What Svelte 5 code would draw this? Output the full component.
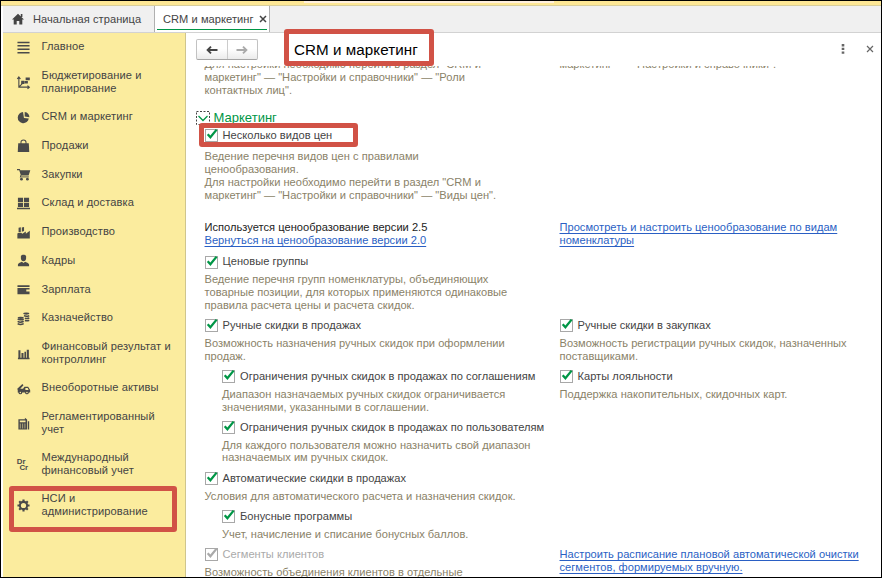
<script lang="ts">
  type Cell = {
    kind: 'option' | 'links';
    label?: string;
    lines: string[];
    nested?: boolean;
    disabled?: boolean;
  };

  const sections = [
    { icon: 'menu', lines: ['Главное'] },
    { icon: 'plan', lines: ['Бюджетирование и', 'планирование'] },
    { icon: 'pie', lines: ['CRM и маркетинг'] },
    { icon: 'bag', lines: ['Продажи'] },
    { icon: 'cart', lines: ['Закупки'] },
    { icon: 'store', lines: ['Склад и доставка'] },
    { icon: 'factory', lines: ['Производство'] },
    { icon: 'person', lines: ['Кадры'] },
    { icon: 'wallet', lines: ['Зарплата'] },
    { icon: 'coins', lines: ['Казначейство'] },
    { icon: 'chart', lines: ['Финансовый результат и', 'контроллинг'] },
    { icon: 'truck', lines: ['Внеоборотные активы'] },
    { icon: 'report', lines: ['Регламентированный', 'учет'] },
    { icon: 'drcr', lines: ['Международный', 'финансовый учет'] },
    { icon: 'gear', lines: ['НСИ и', 'администрирование'] },
  ];

  const rows: { left: Cell; right?: Cell }[] = [
    {
      left: {
        kind: 'option',
        label: 'Ценовые группы',
        lines: [
          'Ведение перечня групп номенклатуры, объединяющих',
          'товарные позиции, для которых применяются одинаковые',
          'правила расчета цены и расчета скидок.',
        ],
      },
    },
    {
      left: {
        kind: 'option',
        label: 'Ручные скидки в продажах',
        lines: ['Возможность назначения ручных скидок при оформлении', 'продаж.'],
      },
      right: {
        kind: 'option',
        label: 'Ручные скидки в закупках',
        lines: ['Возможность регистрации ручных скидок, назначенных', 'поставщиками.'],
      },
    },
    {
      left: {
        kind: 'option',
        nested: true,
        label: 'Ограничения ручных скидок в продажах по соглашениям',
        lines: ['Диапазон назначаемых ручных скидок ограничивается', 'значениями, указанными в соглашении.'],
      },
      right: {
        kind: 'option',
        label: 'Карты лояльности',
        lines: ['Поддержка накопительных, скидочных карт.'],
      },
    },
    {
      left: {
        kind: 'option',
        nested: true,
        label: 'Ограничения ручных скидок в продажах по пользователям',
        lines: ['Для каждого пользователя можно назначить свой диапазон', 'назначаемых им ручных скидок.'],
      },
    },
    {
      left: {
        kind: 'option',
        label: 'Автоматические скидки в продажах',
        lines: ['Условия для автоматического расчета и назначения скидок.'],
      },
    },
    {
      left: {
        kind: 'option',
        nested: true,
        label: 'Бонусные программы',
        lines: ['Учет, начисление и списание бонусных баллов.'],
      },
    },
    {
      left: {
        kind: 'option',
        disabled: true,
        label: 'Сегменты клиентов',
        lines: ['Возможность объединения клиентов в отдельные'],
      },
      right: {
        kind: 'links',
        lines: ['Настроить расписание плановой автоматической очистки', 'сегментов, формируемых вручную.'],
      },
    },
  ];
</script>

{#snippet icon(name: string)}
  <svg class="icon" viewBox="0 0 14 14" aria-hidden="true">
    {#if name === 'menu'}
      <path d="M.5 1.500h13M.5 5.200h13M.5 8.900h13M.5 12.600h13" stroke="currentColor" stroke-width="1.600" />
    {:else if name === 'plan'}
      <path d="M2 1.5v10.5h11M.3 3.200 2 1 3.700 3.200M11.300 10.300 13.300 12l-2 1.700M2.500 11.500 6 8" fill="none" stroke="currentColor" stroke-width="1.200" />
      <path d="M4.500 5h3.400v3.500H4.500zM9.300 1.700h4.500v3H9.300zM8.200 5.300h3.500v2.800H8.200z" />
    {:else if name === 'pie'}
      <path d="M6.500 1.200a6 6 0 1 0 6.200 7L7.500 7.500z" />
      <path d="M8.300 1v4.900l5.100.7A6 6 0 0 0 8.300 1z" />
    {:else if name === 'bag'}
      <path d="M1.300 4.500h11.400l.5 9.500H.8z" />
      <path d="M4.300 6.500V3.600C4.300.3 9.700.3 9.700 3.600v2.900" fill="none" stroke="currentColor" stroke-width="1.100" />
    {:else if name === 'cart'}
      <path d="M0 1h3l.6 1.300H14.300L12.500 8H4.200L2.400 2.400H0z" />
      <path d="M3.500 9.600h9.300M4.300 7.500 3.500 10" stroke="currentColor" />
      <circle cx="4.800" cy="12" r="1.500" /><circle cx="11.200" cy="12" r="1.500" />
    {:else if name === 'store'}
      <path d="M1 .7h5.500v4.900H1zM7.500.7H13v4.900H7.500zM1 6.500h5.500v4.200H1zM7.500 6.500H13v4.200H7.500zM0 11.600h14V13.300H0z" />
    {:else if name === 'factory'}
      <path d="M.4 13.400V8.200l1.500-.8h2.500l1.400 1L9.500 6v2.400L13.800 5v8.400zM1.700 2l2.400-.6v5h-2.400zM5.200 1.700l2.400-.6v4.200l-2.400 1z" />
    {:else if name === 'person'}
      <path d="M4.200 2.200C5.200.3 8.800.3 9.800 2.200V4c.3 2-1 3.700-2.800 3.700S3.900 6 4.200 4zM1 13.300v-1.900C1.400 9.600 4 9.200 5.300 8.300L7 9.600l1.700-1.300c1.300.9 3.900 1.300 4.300 3.100v1.900z" />
    {:else if name === 'wallet'}
      <path d="M.5 2.500h13v1.800H.5zM.5 5.300h13v1.600H10v2.200h3.500v3H.5z" />
    {:else if name === 'coins'}
      <g fill="none" stroke="currentColor" stroke-width="1.600">
        <path d="M.7 7.500c1.500 1 4.500 1 6.500 0M.7 10c1.500 1 4.500 1 6.500 0M.7 12.500c1.500 1 4.500 1 6.500 0" />
        <path d="M7.500 4c1.500.8 3.500.8 5.700 0M8.500 6.700c1.500.5 3 .5 4.700-.2M8.500 9.200c1.500.5 3 .5 4.700-.2" />
      </g>
      <ellipse cx="4" cy="6.300" rx="3.400" ry="1.200" />
      <ellipse cx="10" cy="1.700" rx="3.400" ry="1.200" />
    {:else if name === 'chart'}
      <path d="M1.500 3.500h2.200V12H1.500zM4.800 6.500H7V12H4.800zM8 5h1.700v7H8zM10.500 3h2.300v9h-2.300zM1 11.700h12.500V13.200H1z" />
    {:else if name === 'truck'}
      <path d="m.3 7.400 5.500-5.200 1.200 1.200-3.500 4h3l1.500-2.400H12l2.200 3.700V11.200H.8V9z" />
      <path d="M9 6.500h2.500l1 2H9z" class="cut" />
      <circle cx="3.600" cy="11.200" r="2" /><circle cx="10.700" cy="11.200" r="2" />
      <circle cx="3.600" cy="11.200" r=".8" class="cut" /><circle cx="10.700" cy="11.200" r=".8" class="cut" />
    {:else if name === 'report'}
      <path d="M1.500 2.300h7v-1.500l2.400 2V13.500H1.500zM11.700 4.500h1.400v9h-1.400z" />
      <path class="cut" d="M3 3.700h6.200v2H3zM3 7.200h1.200v1H3zM5.400 7.200h1.200v1H5.400zM7.900 7.200h1.200v1H7.900zM3 9.200h1.200v1H3zM5.400 9.200h1.200v1H5.400zM7.900 9.200h1.200v1H7.900zM3 11.200h1.200v1H3zM5.400 11.200h1.200v1H5.400zM7.900 11.200h1.200v1H7.900z" />
    {:else if name === 'drcr'}
      <text x="-.3" y="6">Dr</text>
      <text x="2.600" y="13.400">Cr</text>
    {:else if name === 'gear'}
      <circle cx="7" cy="7" r="3.900" fill="none" stroke="currentColor" stroke-width="2.200" />
      <path d="M7 .5v2M7 11.500v2M.5 7h2M11.500 7h2M2.400 2.400 4 4M10 10l1.600 1.600M11.600 2.400 10 4M4 10l-1.600 1.600" stroke="currentColor" stroke-width="2.300" />
    {/if}
  </svg>
{/snippet}

{#snippet textLines(lines: string[])}
  {#each lines as line}
    <span class="line">{line}</span>
  {/each}
{/snippet}

{#snippet checkbox(label: string)}
  <div class="option-label">
    <svg class="box" viewBox="0 0 14 14" role="img" aria-label="Включено">
      <rect x="0.500" y="1.500" width="12" height="12" fill="#fff" stroke="#a8a8a8" />
      <path d="M2.700 6.300 5.400 9.300 11.600 1.600" fill="none" stroke="currentColor" stroke-width="2.300" />
    </svg>
    <span>{label}</span>
  </div>
{/snippet}

{#snippet cell(item: Cell)}
  {#if item.kind === 'links'}
    <a class="link side-link" href="#settings">{@render textLines(item.lines)}</a>
  {:else}
    <div class="option" class:nested={item.nested} class:disabled={item.disabled}>
      {@render checkbox(item.label ?? '')}
      <p class="hint">{@render textLines(item.lines)}</p>
    </div>
  {/if}
{/snippet}

<div class="window">
  <div class="strip"><i></i></div>

  <div class="tabs">
    <div class="tab home">
      <svg class="house" viewBox="0 0 12 12" aria-hidden="true">
        <path d="M6 .7 12 6.500h-1.700V11.500H7.300V8H4.700v3.500H1.700V6.500H0zM8.800 1h1.600v3H8.800z" />
      </svg>
      <span>Начальная страница</span>
    </div>
    <div class="tab active">
      <span>CRM и маркетинг</span>
      <svg class="tab-close" viewBox="0 0 8 8" aria-hidden="true">
        <path d="m1 1 6 6M7 1 1 7" stroke="currentColor" stroke-width="1.500" />
      </svg>
    </div>
  </div>

  <div class="body">
    <nav class="sidebar">
      {#each sections as section}
        <div class="section" class:double={section.lines.length > 1}>
          {@render icon(section.icon)}
          <span>{@render textLines(section.lines)}</span>
        </div>
      {/each}
    </nav>

    <main>
      <header>
        <div class="history">
          <button aria-label="Назад">
            <svg viewBox="0 0 12 10"><path d="M11.500 5H2M5 1.600 1.600 5 5 8.400" /></svg>
          </button>
          <button class="off" aria-label="Вперед">
            <svg viewBox="0 0 12 10"><path d="M.5 5H10M7 1.600 10.400 5 7 8.400" /></svg>
          </button>
        </div>
        <h1>CRM и маркетинг</h1>
        <svg class="more" viewBox="0 0 4 10" aria-hidden="true">
          <path d="M.7 0h2.600v2.400H.7zM.7 3.700h2.600v2.400H.7zM.7 7.400h2.600v2.400H.7z" />
        </svg>
        <svg class="close" viewBox="0 0 8 8" aria-hidden="true">
          <path d="m1 1 6 6M7 1 1 7" stroke="currentColor" stroke-width="1.200" />
        </svg>
      </header>

      <div class="scroll">
        <div class="columns previous">
          <p class="hint">
            {@render textLines([
              'Для настройки необходимо перейти в раздел "CRM и',
              'маркетинг" — "Настройки и справочники" — "Роли',
              'контактных лиц".',
            ])}
          </p>
          <p class="hint">{@render textLines(['маркетинг" — "Настройки и справочники".'])}</p>
        </div>

        <h2>
          <svg class="chevron" viewBox="0 0 14 14" aria-hidden="true">
            <rect x="0.500" y="0.500" width="13" height="13" fill="none" stroke="#444" stroke-dasharray="2 1.500" />
            <path d="m2.500 5 4.500 4.500L11.500 5" fill="none" stroke="currentColor" stroke-width="1.300" />
          </svg>
          <span>Маркетинг</span>
        </h2>

        <div class="option first">
          {@render checkbox('Несколько видов цен')}
          <p class="hint">
            {@render textLines([
              'Ведение перечня видов цен с правилами',
              'ценообразования.',
              'Для настройки необходимо перейти в раздел "CRM и',
              'маркетинг" — "Настройки и справочники" — "Виды цен".',
            ])}
          </p>
        </div>

        <div class="columns pricing">
          <div>
            <span class="line">Используется ценообразование версии 2.5</span>
            <a class="link" href="#version"><span class="line">Вернуться на ценообразование версии 2.0</span></a>
          </div>
          <a class="link" href="#pricing">
            {@render textLines(['Просмотреть и настроить ценообразование по видам', 'номенклатуры'])}
          </a>
        </div>

        {#each rows as row}
          <div class="columns">
            <div>{@render cell(row.left)}</div>
            <div>{#if row.right}{@render cell(row.right)}{/if}</div>
          </div>
        {/each}
      </div>
    </main>
  </div>

  <!-- callouts over the window -->
  <div class="mark title-mark"></div>
  <div class="mark price-mark"></div>
  <div class="mark admin-mark"></div>
</div>

<style>
  :global(body) {
    background: #fff;
  }
  .window {
    position: relative;
    box-sizing: border-box;
    width: 882px;
    height: 578px;
    border: 1px solid #000;
    overflow: hidden;
    display: flex;
    flex-direction: column;
    background: #fff;
    color: #444;
    font: 11.1px/12.8px 'Liberation Sans', Arial, sans-serif;
    letter-spacing: 0.05px;
    white-space: nowrap;
  }
  .strip {
    flex: none;
    box-sizing: border-box;
    height: 5px;
    background: #fde795;
    border-bottom: 1px solid #d8cf9d;
  }
  .strip i {
    display: block;
    width: 250px;
    height: 2px;
    margin-left: 303px;
    background: #fff0df;
  }
  .tabs {
    flex: none;
    box-sizing: border-box;
    height: 27px;
    margin-left: 2px;
    display: flex;
    background: #f0f0f0;
    border-bottom: 1px solid #d2d2d2;
  }
  .tab {
    box-sizing: border-box;
    display: flex;
    align-items: center;
    height: 26px;
  }
  .home {
    width: 151px;
    padding-left: 9px;
    gap: 9px;
  }
  .house {
    width: 12px;
    height: 12px;
    fill: #444;
  }
  .active {
    width: 116px;
    padding-left: 8px;
    gap: 5px;
    background: linear-gradient(#009646, #009646) 2px 23px / 110px 1px no-repeat #fff;
    border-left: 1px solid #b0b0b0;
    border-right: 1px solid #b0b0b0;
  }
  .tab-close {
    width: 8px;
    height: 8px;
  }
  .body {
    flex: 1;
    min-height: 0;
    display: flex;
  }
  .sidebar {
    box-sizing: border-box;
    width: 183px;
    flex: none;
    margin-left: 2px;
    background: #fbec9e;
    border-right: 1px solid #cfc58d;
    letter-spacing: 0.1px;
  }
  .section {
    box-sizing: border-box;
    height: 28.750px;
    padding-left: 14px;
    display: flex;
    align-items: center;
    gap: 11.500px;
  }
  .section > span {
    margin-top: -1px;
  }
  .section.double {
    height: 41px;
  }
  .icon {
    width: 13px;
    height: 13px;
    fill: currentColor;
    color: #4a4a4a;
    overflow: visible;
  }
  .icon .cut {
    fill: #fbec9e;
  }
  .icon text {
    font: bold 8.500px 'Liberation Sans', sans-serif;
    letter-spacing: 0;
  }
  .line {
    display: block;
  }
  main {
    flex: 1;
    min-width: 0;
    display: flex;
    flex-direction: column;
  }
  header {
    flex: none;
    height: 33px;
    padding: 0 7px 0 10px;
    display: flex;
    align-items: center;
  }
  .history {
    display: flex;
    box-sizing: border-box;
    width: 62px;
    height: 21px;
    border: 1px solid #c2c2c2;
    border-bottom-color: #a5a5a5;
    border-radius: 2px;
    background: linear-gradient(#fff 45%, #ebebeb);
  }
  .history button {
    flex: 1;
    display: flex;
    align-items: center;
    justify-content: center;
    padding: 0;
    border: 0;
    background: none;
    color: #444;
  }
  .history .off {
    border-left: 1px solid #ccc;
    color: #aaa;
  }
  .history svg {
    width: 12px;
    height: 10px;
    fill: none;
    stroke: currentColor;
    stroke-width: 1.900;
  }
  h1 {
    margin: 0 auto 0 36px;
    font-size: 15.200px;
    font-weight: normal;
    line-height: 20px;
    color: #000;
  }
  .more {
    width: 4px;
    height: 10px;
    margin-top: -2px;
    fill: #666;
  }
  .close {
    width: 8px;
    height: 8px;
    margin: -2px 0 0 21px;
    color: #666;
  }
  .scroll {
    flex: 1;
    min-height: 0;
    overflow: hidden;
    padding-left: 18.500px;
    letter-spacing: 0.020px;
  }
  .columns {
    display: grid;
    grid-template-columns: 355px 1fr;
  }
  .previous {
    margin-top: -8px;
  }
  .hint {
    margin: 0;
    color: #8a8268;
  }
  h2 {
    display: flex;
    align-items: center;
    gap: 4px;
    height: 14px;
    margin: 15px 0 0 -9px;
    font-size: 13px;
    font-weight: normal;
    color: #009646;
  }
  .chevron {
    width: 14px;
    height: 14px;
  }
  .option {
    padding-bottom: 5.700px;
  }
  .option.nested {
    margin-left: 17.500px;
  }
  .option-label {
    display: flex;
    align-items: center;
    gap: 4px;
    height: 16px;
    margin-bottom: 3.600px;
  }
  .box {
    width: 14px;
    height: 14px;
    color: #009646;
    overflow: visible;
  }
  .disabled .option-label,
  .disabled .box {
    color: #aaa;
  }
  .first {
    margin-top: 2px;
    padding-bottom: 19.500px;
  }
  .first .hint {
    padding-top: 3.400px;
  }
  .pricing {
    color: #222;
    margin-bottom: 7px;
  }
  .link {
    display: block;
    color: #2a5fc4;
    text-decoration: underline;
    text-underline-offset: 2px;
    text-decoration-thickness: 1px;
  }
  .side-link {
    padding-top: 2px;
  }
  .mark {
    position: absolute;
    box-sizing: border-box;
    border: 5px solid #d15246;
    border-radius: 3px;
  }
  .title-mark {
    left: 283px;
    top: 28px;
    width: 150px;
    height: 37px;
  }
  .price-mark {
    left: 198px;
    top: 122px;
    width: 159px;
    height: 24px;
  }
  .admin-mark {
    left: 8px;
    top: 485px;
    width: 168px;
    height: 46px;
  }
</style>
